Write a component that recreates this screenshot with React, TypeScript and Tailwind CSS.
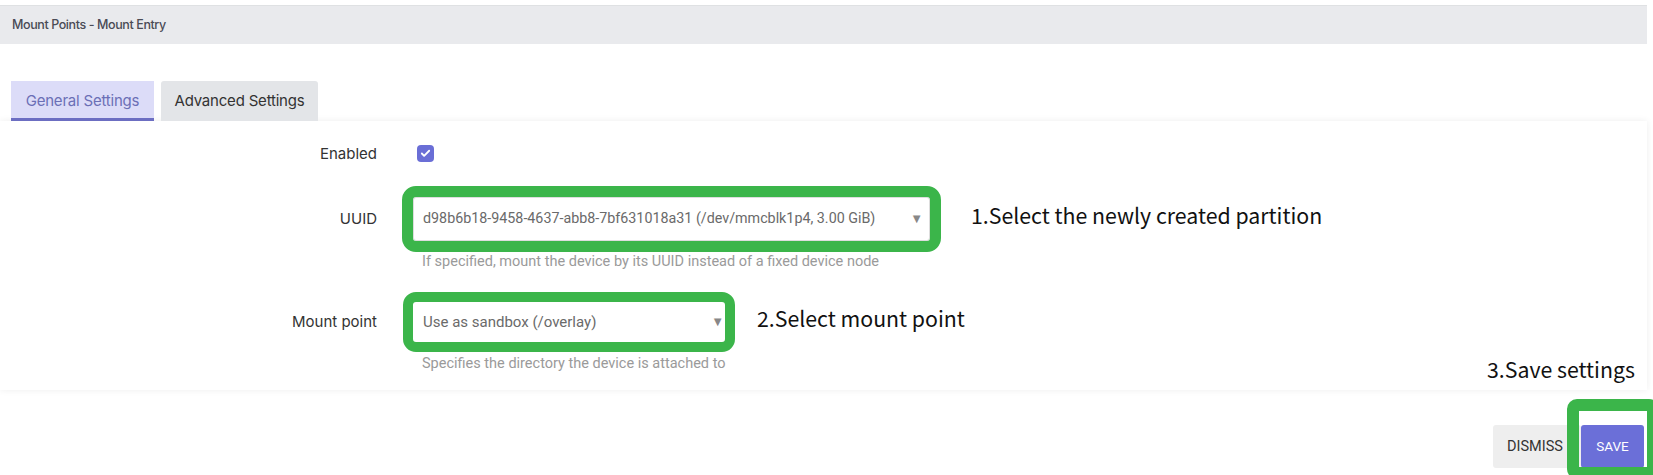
import { Check } from 'lucide-react';

const green = 'outline-[#3bb54a]';

function Annotation({ children, className = '' }: { children: React.ReactNode; className?: string }) {
  return (
    <span className={`font-['Noto_Sans_CJK_SC',sans-serif] text-[21.3px] leading-[28px] text-[#111] ${className}`}>
      {children}
    </span>
  );
}

function App() {
  return (
    <div className="relative h-[475px] w-[1653px] overflow-hidden bg-white font-['Inter',sans-serif]">
      {/* Title bar */}
      <div className="mt-[5px] flex h-[39px] w-[1647px] items-center border-t border-[#dfe1e3] bg-[#e9eaed] pl-[12px]">
        <span className="text-[12.5px] font-medium tracking-[-0.4px] text-[#4a4b55]">Mount Points - Mount Entry</span>
      </div>

      {/* Tabs */}
      <div className="ml-[11px] mt-[37px] flex gap-[7px]">
        <div className="flex h-[40px] w-[143px] items-center justify-center border-b-[3px] border-[#6c6ec2] bg-[#dcdcf8] pt-[3px] text-[15px] tracking-[-0.2px] text-[#6b6fb6]">
          General Settings
        </div>
        <div className="flex h-[40px] w-[157px] items-center justify-center rounded-t-[3px] bg-[#e3e5e8] text-[15px] tracking-[-0.2px] text-[#333]">
          Advanced Settings
        </div>
      </div>

      {/* Form panel */}
      <div className="w-[1647px] bg-white pb-[17px] pt-[24px] shadow-[0_0_7px_rgba(0,0,0,0.07)]">
        <div className="flex items-center">
          <label className="w-[377px] text-right text-[15px] leading-[17px] text-[#333]">Enabled</label>
          <div className="ml-[40px] flex h-[17px] w-[17px] items-center justify-center rounded-[4px] bg-[#6a6ed6]">
            <Check className="h-[11px] w-[11px] text-white" strokeWidth={4} />
          </div>
        </div>

        <div className="mt-[35px] flex items-center">
          <label className="w-[377px] text-right text-[15px] text-[#333]">UUID</label>
          <div className={`ml-[36px] flex h-[44px] w-[517px] items-center justify-between rounded-[3px] border border-[#dddddd] bg-white pl-[9px] pr-[6px] font-['Roboto',sans-serif] text-[14.3px] text-[#6a6a6a] outline-[11px] ${green}`}>
            <span>d98b6b18-9458-4637-abb8-7bf631018a31 (/dev/mmcblk1p4, 3.00 GiB)</span>
            <span className="text-[13px] text-[#888]">▼</span>
          </div>
          <Annotation className="mb-[9px] ml-[41px]">1.Select the newly created partition</Annotation>
        </div>
        <div className="ml-[422px] mt-[12px] font-['Roboto',sans-serif] text-[14.5px] leading-[18px] text-[#9a9a9a]">
          If specified, mount the device by its UUID instead of a fixed device node
        </div>

        <div className="mt-[31px] flex items-center">
          <label className="w-[377px] text-right text-[15px] text-[#333]">Mount point</label>
          <div className={`ml-[36px] flex h-[40px] w-[312px] items-center justify-between rounded-[3px] bg-white pl-[10px] pr-[1px] font-['Roboto',sans-serif] text-[15px] text-[#6a6a6a] outline-[10px] ${green}`}>
            <span>Use as sandbox (/overlay)</span>
            <span className="text-[13px] text-[#888]">▼</span>
          </div>
          <Annotation className="mb-[8px] ml-[32px]">2.Select mount point</Annotation>
        </div>
        <div className="ml-[422px] mt-[13px] font-['Roboto',sans-serif] text-[14.5px] leading-[18px] text-[#9a9a9a]">
          Specifies the directory the device is attached to
        </div>
      </div>

      {/* Footer buttons */}
      <div className="mt-[35px] flex justify-end pr-[9px] font-['Roboto',sans-serif]">
        <button className="h-[43px] w-[88px] rounded-[3px] bg-[#eeeeee] pr-[4px] text-[14.5px] text-[#333]">DISMISS</button>
        <button className="h-[43px] w-[63px] rounded-[3px] bg-[#6b6fd8] text-[13.5px] text-white">SAVE</button>
      </div>

      {/* Annotation overlays */}
      <Annotation className="absolute left-[1487px] top-[355px]">3.Save settings</Annotation>
      <div className="absolute left-[1567px] top-[399px] h-[80px] w-[92px] rounded-[10px] border-[12px] border-[#3bb54a]" />
    </div>
  );
}

export default App;
